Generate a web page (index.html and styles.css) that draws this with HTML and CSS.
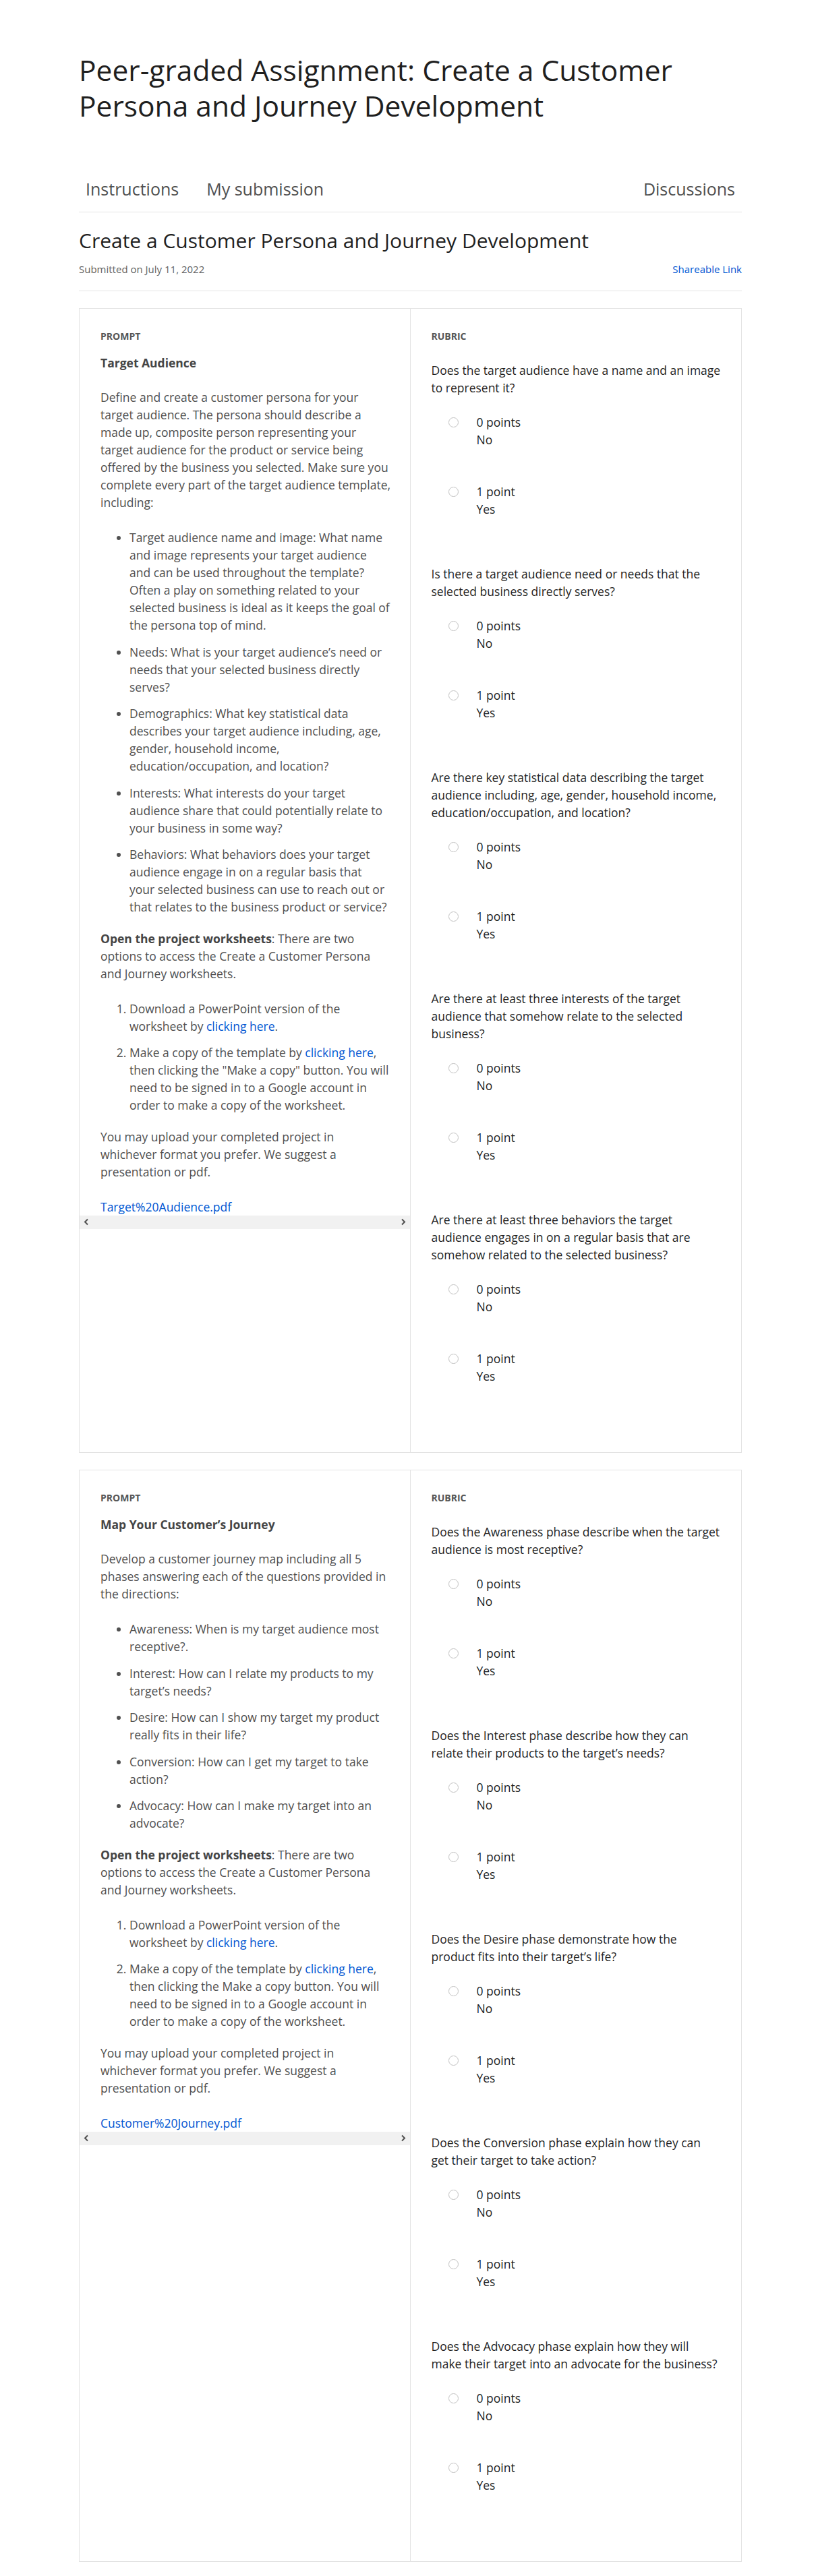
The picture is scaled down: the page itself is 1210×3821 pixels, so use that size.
FILE: index.html
```html
<!DOCTYPE html>
<html lang="en">
<head>
<meta charset="utf-8">
<title>Peer-graded Assignment: Create a Customer Persona and Journey Development</title>
<link rel="stylesheet" href="styles.css">
</head>
<body>
<div class="page">
  <h1 class="title">Peer-graded Assignment: Create a Customer Persona and Journey Development</h1>

  <nav class="tabs">
    <a class="tab" href="#">Instructions</a>
    <a class="tab" href="#">My submission</a>
    <a class="tab tab-right" href="#">Discussions</a>
  </nav>

  <h2 class="sub-title">Create a Customer Persona and Journey Development</h2>
  <div class="meta">
    <span class="meta-date">Submitted on July 11, 2022</span>
    <a class="link" href="#">Shareable Link</a>
  </div>

  <section class="card">
    <div class="prompt-col">
      <div class="prompt-body">
        <div class="label">Prompt</div>
        <h3 class="prompt-title">Target Audience</h3>
        <div class="prompt-text">
          <p>Define and create a customer persona for your<br>target audience. The persona should describe a<br>made up, composite person representing your<br>target audience for the product or service being<br>offered by the business you selected. Make sure you<br>complete every part of the target audience template,<br>including:</p>
          <ul>
            <li>Target audience name and image: What name<br>and image represents your target audience<br>and can be used throughout the template?<br>Often a play on something related to your<br>selected business is ideal as it keeps the goal of<br>the persona top of mind.</li>
            <li>Needs: What is your target audience’s need or<br>needs that your selected business directly<br>serves?</li>
            <li>Demographics: What key statistical data<br>describes your target audience including, age,<br>gender, household income,<br>education/occupation, and location?</li>
            <li>Interests: What interests do your target<br>audience share that could potentially relate to<br>your business in some way?</li>
            <li>Behaviors: What behaviors does your target<br>audience engage in on a regular basis that<br>your selected business can use to reach out or<br>that relates to the business product or service?</li>
          </ul>
          <p><strong>Open the project worksheets</strong>: There are two<br>options to access the Create a Customer Persona<br>and Journey worksheets.</p>
          <ol>
            <li>Download a PowerPoint version of the<br>worksheet by <a class="link" href="#">clicking here</a>.</li>
            <li>Make a copy of the template by <a class="link" href="#">clicking here</a>,<br>then clicking the "Make a copy" button. You will<br>need to be signed in to a Google account in<br>order to make a copy of the worksheet.</li>
          </ol>
          <p>You may upload your completed project in<br>whichever format you prefer. We suggest a<br>presentation or pdf.</p>
          <a class="link file-link" href="#">Target%20Audience.pdf</a>
        </div>
      </div>
      <div class="hscroll">
        <svg class="arrow" width="8" height="11" viewBox="0 0 8 11"><polyline points="6,1.5 2,5.5 6,9.5" fill="none" stroke="#505050" stroke-width="2"/></svg>
        <svg class="arrow" width="8" height="11" viewBox="0 0 8 11"><polyline points="2,1.5 6,5.5 2,9.5" fill="none" stroke="#505050" stroke-width="2"/></svg>
      </div>
    </div>

    <div class="rubric-col">
      <div class="label">Rubric</div>
      <div class="criterion">
        <div class="q">Does the target audience have a name and an image<br>to represent it?</div>
        <div class="option"><span class="radio"></span><div class="opt-text"><div>0 points</div><div>No</div></div></div>
        <div class="option"><span class="radio"></span><div class="opt-text"><div>1 point</div><div>Yes</div></div></div>
      </div>
      <div class="criterion">
        <div class="q">Is there a target audience need or needs that the<br>selected business directly serves?</div>
        <div class="option"><span class="radio"></span><div class="opt-text"><div>0 points</div><div>No</div></div></div>
        <div class="option"><span class="radio"></span><div class="opt-text"><div>1 point</div><div>Yes</div></div></div>
      </div>
      <div class="criterion">
        <div class="q">Are there key statistical data describing the target<br>audience including, age, gender, household income,<br>education/occupation, and location?</div>
        <div class="option"><span class="radio"></span><div class="opt-text"><div>0 points</div><div>No</div></div></div>
        <div class="option"><span class="radio"></span><div class="opt-text"><div>1 point</div><div>Yes</div></div></div>
      </div>
      <div class="criterion">
        <div class="q">Are there at least three interests of the target<br>audience that somehow relate to the selected<br>business?</div>
        <div class="option"><span class="radio"></span><div class="opt-text"><div>0 points</div><div>No</div></div></div>
        <div class="option"><span class="radio"></span><div class="opt-text"><div>1 point</div><div>Yes</div></div></div>
      </div>
      <div class="criterion">
        <div class="q">Are there at least three behaviors the target<br>audience engages in on a regular basis that are<br>somehow related to the selected business?</div>
        <div class="option"><span class="radio"></span><div class="opt-text"><div>0 points</div><div>No</div></div></div>
        <div class="option"><span class="radio"></span><div class="opt-text"><div>1 point</div><div>Yes</div></div></div>
      </div>
    </div>
  </section>

  <section class="card">
    <div class="prompt-col">
      <div class="prompt-body">
        <div class="label">Prompt</div>
        <h3 class="prompt-title">Map Your Customer’s Journey</h3>
        <div class="prompt-text">
          <p>Develop a customer journey map including all 5<br>phases answering each of the questions provided in<br>the directions:</p>
          <ul>
            <li>Awareness: When is my target audience most<br>receptive?.</li>
            <li>Interest: How can I relate my products to my<br>target’s needs?</li>
            <li>Desire: How can I show my target my product<br>really fits in their life?</li>
            <li>Conversion: How can I get my target to take<br>action?</li>
            <li>Advocacy: How can I make my target into an<br>advocate?</li>
          </ul>
          <p><strong>Open the project worksheets</strong>: There are two<br>options to access the Create a Customer Persona<br>and Journey worksheets.</p>
          <ol>
            <li>Download a PowerPoint version of the<br>worksheet by <a class="link" href="#">clicking here</a>.</li>
            <li>Make a copy of the template by <a class="link" href="#">clicking here</a>,<br>then clicking the Make a copy button. You will<br>need to be signed in to a Google account in<br>order to make a copy of the worksheet.</li>
          </ol>
          <p>You may upload your completed project in<br>whichever format you prefer. We suggest a<br>presentation or pdf.</p>
          <a class="link file-link" href="#">Customer%20Journey.pdf</a>
        </div>
      </div>
      <div class="hscroll">
        <svg class="arrow" width="8" height="11" viewBox="0 0 8 11"><polyline points="6,1.5 2,5.5 6,9.5" fill="none" stroke="#505050" stroke-width="2"/></svg>
        <svg class="arrow" width="8" height="11" viewBox="0 0 8 11"><polyline points="2,1.5 6,5.5 2,9.5" fill="none" stroke="#505050" stroke-width="2"/></svg>
      </div>
    </div>

    <div class="rubric-col">
      <div class="label">Rubric</div>
      <div class="criterion">
        <div class="q">Does the Awareness phase describe when the target<br>audience is most receptive?</div>
        <div class="option"><span class="radio"></span><div class="opt-text"><div>0 points</div><div>No</div></div></div>
        <div class="option"><span class="radio"></span><div class="opt-text"><div>1 point</div><div>Yes</div></div></div>
      </div>
      <div class="criterion">
        <div class="q">Does the Interest phase describe how they can<br>relate their products to the target’s needs?</div>
        <div class="option"><span class="radio"></span><div class="opt-text"><div>0 points</div><div>No</div></div></div>
        <div class="option"><span class="radio"></span><div class="opt-text"><div>1 point</div><div>Yes</div></div></div>
      </div>
      <div class="criterion">
        <div class="q">Does the Desire phase demonstrate how the<br>product fits into their target’s life?</div>
        <div class="option"><span class="radio"></span><div class="opt-text"><div>0 points</div><div>No</div></div></div>
        <div class="option"><span class="radio"></span><div class="opt-text"><div>1 point</div><div>Yes</div></div></div>
      </div>
      <div class="criterion">
        <div class="q">Does the Conversion phase explain how they can<br>get their target to take action?</div>
        <div class="option"><span class="radio"></span><div class="opt-text"><div>0 points</div><div>No</div></div></div>
        <div class="option"><span class="radio"></span><div class="opt-text"><div>1 point</div><div>Yes</div></div></div>
      </div>
      <div class="criterion">
        <div class="q">Does the Advocacy phase explain how they will<br>make their target into an advocate for the business?</div>
        <div class="option"><span class="radio"></span><div class="opt-text"><div>0 points</div><div>No</div></div></div>
        <div class="option"><span class="radio"></span><div class="opt-text"><div>1 point</div><div>Yes</div></div></div>
      </div>
    </div>
  </section>
</div>
</body>
</html>
```

FILE: styles.css
```css
html, body {
  margin: 0;
  padding: 0;
  background: #ffffff;
}

body {
  font-family: "Open Sans", "Noto Sans", "Liberation Sans", sans-serif;
  color: #1f1f1f;
}

.page {
  width: 983px;
  margin-left: 117px;
  padding: 76.5px 0 17px;
}

.title {
  margin: 0;
  font-size: 42.5px;
  line-height: 53px;
  font-weight: 400;
  color: #1f1f1f;
}

.tabs {
  display: flex;
  margin-top: 64px;
  border-bottom: 1px solid #e3e3e3;
}

.tab {
  padding: 15px 10px 16px;
  margin-right: 21px;
  font-size: 25px;
  line-height: 36px;
  color: #505050;
  text-decoration: none;
}

.tab-right {
  margin-left: auto;
  margin-right: 0;
}

.sub-title {
  margin: 24px 0 0;
  font-size: 30px;
  line-height: 36px;
  font-weight: 400;
  color: #1f1f1f;
}

.meta {
  display: flex;
  justify-content: space-between;
  margin-top: 14px;
  padding-bottom: 22px;
  border-bottom: 1px solid #e3e3e3;
  font-size: 15px;
  line-height: 20px;
}

.meta-date {
  color: #636363;
}

.link {
  color: #0056d2;
  text-decoration: none;
}

.card {
  display: grid;
  grid-template-columns: 1fr 1fr;
  margin-top: 25px;
  border: 1px solid #e3e3e3;
}

.prompt-col {
  border-right: 1px solid #e3e3e3;
}

.prompt-body {
  padding: 31px 12px 0 31px;
}

.label {
  font-size: 14px;
  line-height: 20px;
  font-weight: 700;
  text-transform: uppercase;
  color: #555555;
}

.prompt-title {
  margin: 16px 0 25.5px;
  font-size: 17.5px;
  line-height: 26px;
  font-weight: 700;
  color: #454545;
}

.prompt-text {
  font-size: 17.5px;
  line-height: 26px;
  color: #505050;
}

.prompt-text p {
  margin: 0 0 26px;
}

.prompt-text strong {
  color: #454545;
}

.prompt-text ul,
.prompt-text ol {
  margin: 0 0 20.5px;
  padding-left: 43px;
}

.prompt-text li {
  margin-bottom: 13.5px;
}

.prompt-text li:last-child {
  margin-bottom: 0;
}

.file-link {
  display: block;
  line-height: 26px;
}

.hscroll {
  display: flex;
  justify-content: space-between;
  align-items: center;
  height: 20px;
  padding: 0 6px;
  background: #f1f1f1;
}

.arrow {
  display: block;
}

.rubric-col {
  padding: 31px 12px 100px 31px;
}

.rubric-col .label {
  margin-bottom: 27px;
}

.criterion + .criterion {
  margin-top: 70px;
}

.q {
  margin-bottom: 25px;
  font-size: 17.5px;
  line-height: 26px;
  color: #1f1f1f;
}

.option {
  display: flex;
  padding-left: 25px;
  font-size: 17.5px;
  line-height: 26px;
  color: #1f1f1f;
}

.option + .option {
  margin-top: 51px;
}

.radio {
  flex: none;
  box-sizing: border-box;
  width: 15px;
  height: 15px;
  margin-top: 6px;
  border: 1.5px solid #c2c2c2;
  border-radius: 50%;
  background: #ffffff;
}

.opt-text {
  margin-left: 27px;
}
```
